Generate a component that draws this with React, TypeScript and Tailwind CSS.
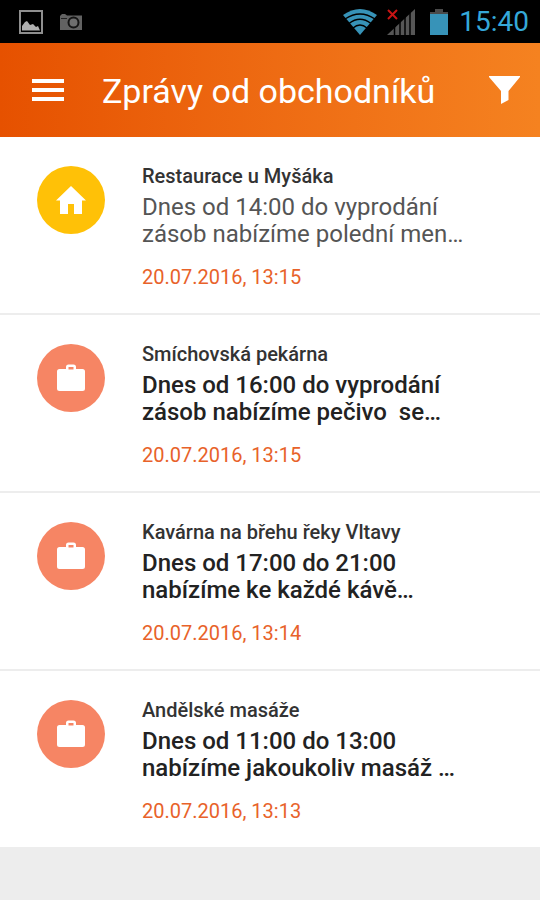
import { ReactNode } from "react";

type IMessage = {
  id: number;
  merchant: string;
  lines: string[];
  date: string;
  kind: "home" | "work";
  unread: boolean;
};

const messages: IMessage[] = [
  {
    id: 1,
    merchant: "Restaurace u Myšáka",
    lines: ["Dnes od 14:00 do vyprodání", "zásob nabízíme polední men…"],
    date: "20.07.2016, 13:15",
    kind: "home",
    unread: false,
  },
  {
    id: 2,
    merchant: "Smíchovská pekárna",
    lines: ["Dnes od 16:00 do vyprodání", "zásob nabízíme pečivo  se…"],
    date: "20.07.2016, 13:15",
    kind: "work",
    unread: true,
  },
  {
    id: 3,
    merchant: "Kavárna na břehu řeky Vltavy",
    lines: ["Dnes od 17:00 do 21:00", "nabízíme ke každé kávě…"],
    date: "20.07.2016, 13:14",
    kind: "work",
    unread: true,
  },
  {
    id: 4,
    merchant: "Andělské masáže",
    lines: ["Dnes od 11:00 do 13:00", "nabízíme jakoukoliv masáž …"],
    date: "20.07.2016, 13:13",
    kind: "work",
    unread: true,
  },
];

function HomeIcon() {
  return (
    <svg width="30" height="30" viewBox="0 0 30 30" fill="#fff">
      <path d="M15 1 30 15.500H26V29H18V19H12V29H4V15.500H0Z" />
    </svg>
  );
}

function WorkIcon() {
  return (
    <svg width="30" height="30" viewBox="0 0 30 30" fill="#fff" fillRule="evenodd">
      <path d="M10 6V4A2.500 2.500 0 0 1 12.500 1.500H17.500A2.500 2.500 0 0 1 20 4V6H26.500A2.500 2.500 0 0 1 29 8.500V25.500A2.500 2.500 0 0 1 26.500 28H3.500A2.500 2.500 0 0 1 1 25.500V8.500A2.500 2.500 0 0 1 3.500 6ZM12.500 6.500H17.500V4H12.500Z" />
    </svg>
  );
}

function StatusBar() {
  return (
    <div className="flex h-[43px] items-center justify-between bg-black pl-[19px] pr-[11px]">
      <div className="flex items-center gap-[17px]">
        <svg width="24" height="24" viewBox="0 0 24 24">
          <rect x="1" y="1" width="22" height="22" fill="none" stroke="#8f8f8f" strokeWidth="2" />
          <path d="M3 20.500V16L6 12L8 11L11 15L14 14L17 17L19 16L21 20.500Z" fill="#b0b0b0" />
        </svg>
        <svg width="22" height="16" viewBox="0 0 22 16">
          <path d="M0 2 2 0H5L7 1.500H22V16H0Z" fill="#626262" />
          <path d="M1 4.500H7" stroke="#222" />
          <circle cx="13.500" cy="8.500" r="5" fill="#6e6e6e" stroke="#141414" strokeWidth="2" />
        </svg>
      </div>
      <div className="flex items-center">
        <svg width="34" height="26" viewBox="0 0 34 26">
          <path d="M0 6Q17 -6 34 6L17 26Z" fill="#3793b8" />
          <path
            d="M2 10Q17 0 32 10M6 14.500Q17 6 28 14.500M10 19Q17 13 24 19"
            fill="none"
            stroke="#000"
            strokeWidth="1.500"
          />
        </svg>
        <svg className="ml-[10px]" width="28" height="26" viewBox="0 0 28 26">
          <path d="M0 26 28 0V26Z" fill="#565656" />
          <path d="M7.500 0V26M13 0V26M18 0V26M23 0V26" stroke="#000" strokeWidth="1.500" />
          <path d="M1 1 10 10M10 1 1 10" stroke="#c81414" strokeWidth="2" />
        </svg>
        <svg className="ml-[15px]" width="18" height="26" viewBox="0 0 18 26">
          <path d="M5 0H13V3H18V5H0V3H5Z" fill="#4a4a4a" />
          <path d="M0 5H18V26H0Z" fill="#3793b8" />
        </svg>
        <time className="ml-[11px] text-[28px] leading-8 text-[#35a8d8]">15:40</time>
      </div>
    </div>
  );
}

function AppHeader() {
  return (
    <header className="flex h-[94px] items-center bg-linear-to-r from-[#e65100] to-[#f58220] pl-[19px] pr-5 text-white">
      <button type="button" aria-label="Menu" className="p-3">
        <svg width="33" height="24" viewBox="0 0 33 24" fill="#fff">
          <path d="M1 1H33V5H1ZM1 10H33V14H1ZM1 19H33V23H1Z" />
        </svg>
      </button>
      <h1 className="ml-[26px] flex-1 whitespace-nowrap pt-[2px] text-[34px] leading-10">
        Zprávy od obchodníků
      </h1>
      <button type="button" aria-label="Filtr">
        <svg width="31" height="28" viewBox="0 0 31 28" fill="#fff">
          <path d="M0 0H31V1L19.500 15V24L12 28V15L0 1Z" />
        </svg>
      </button>
    </header>
  );
}

function Badge({ className, children }: { className: string; children: ReactNode }) {
  return (
    <div className={"flex size-[68px] shrink-0 items-center justify-center rounded-full " + className}>
      {children}
    </div>
  );
}

function MessageRow({ message }: { message: IMessage }) {
  return (
    <li className="flex h-[178px] gap-[37px] border-b-2 border-[#ededed] pl-[37px] pr-4 pt-[25px] last:h-[176px] last:border-b-0">
      {message.kind === "home" ? (
        <Badge className="mt-1 bg-[#ffc107]">
          <HomeIcon />
        </Badge>
      ) : (
        <Badge className="mt-1 bg-[#f68564]">
          <WorkIcon />
        </Badge>
      )}
      <div className="min-w-0 flex-1">
        <h2 className="text-[20px] font-medium leading-[28px] text-[#333]">{message.merchant}</h2>
        <p
          className={
            message.unread
              ? "mt-1 whitespace-pre text-[24px] font-medium leading-[27px] text-[#222]"
              : "mt-1 whitespace-pre text-[24px] font-normal leading-[27px] text-[#555]"
          }
        >
          {message.lines.join("\n")}
        </p>
        <time className="mt-[15px] block text-[20px] leading-[28px] text-[#e8622a]">{message.date}</time>
      </div>
    </li>
  );
}

export default function App() {
  return (
    <div className="min-h-screen bg-[#ededed] font-[Roboto,sans-serif]">
      <StatusBar />
      <AppHeader />
      <main>
        <ul className="bg-white">
          {messages.map((message) => (
            <MessageRow key={message.id} message={message} />
          ))}
        </ul>
      </main>
    </div>
  );
}
